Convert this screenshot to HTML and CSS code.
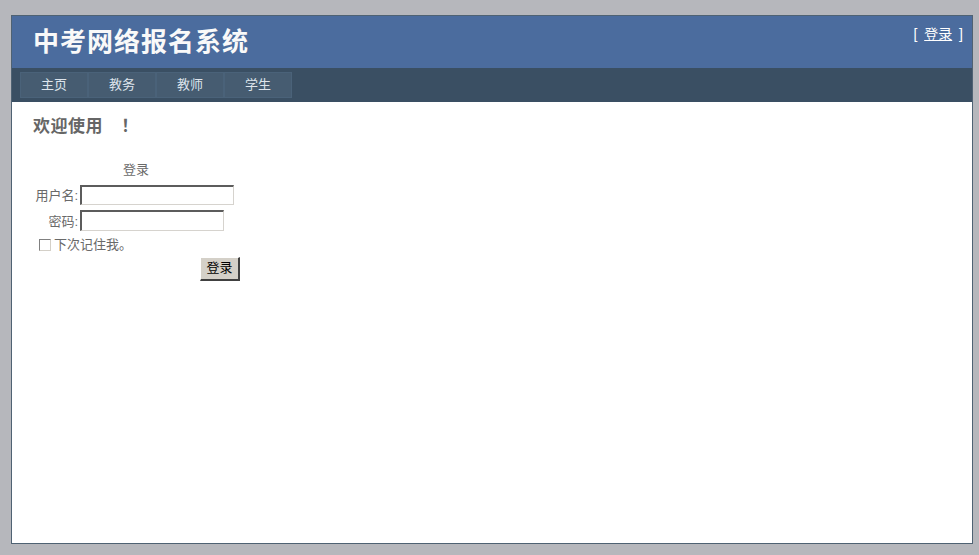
FILE: index.html
```html
<!DOCTYPE html>
<html lang="zh-CN">
<head>
<meta charset="utf-8">
<title>中考网络报名系统</title>
<link rel="stylesheet" href="styles.css">
</head>
<body>
<div class="page">
  <div class="header">
    <h1 class="title">中考网络报名系统</h1>
    <div class="login-display">[ <a href="#" class="login-link">登录</a> ]</div>
  </div>
  <div class="menu-bar">
    <ul class="menu">
      <li><a href="#" class="menu-item">主页</a></li>
      <li><a href="#" class="menu-item">教务</a></li>
      <li><a href="#" class="menu-item">教师</a></li>
      <li><a href="#" class="menu-item">学生</a></li>
    </ul>
  </div>
  <div class="main">
    <h2 class="welcome">欢迎使用 ！</h2>
    <form class="login-form">
      <div class="caption">登录</div>
      <div class="row row-user">
        <label class="label">用户名:</label>
        <span class="input input-user"></span>
      </div>
      <div class="row row-pass">
        <label class="label">密码:</label>
        <span class="input input-pass"></span>
      </div>
      <div class="row row-remember">
        <span class="checkbox"></span>
        <span class="remember-text">下次记住我。</span>
      </div>
      <div class="row row-button">
        <span class="button">登录</span>
      </div>
    </form>
  </div>
</div>
</body>
</html>
```
FILE: styles.css
```css
html, body {
  margin: 0;
  padding: 0;
}
body {
  background: #b6b7bc;
  font-family: "Liberation Sans", "Noto Sans CJK SC", sans-serif;
  font-size: 13px;
  color: #696969;
}
.page {
  width: 960px;
  height: 527px;
  margin: 15px 0 0 11px;
  background: #fff;
  border: 1px solid #4f6273;
}
.header {
  display: flex;
  justify-content: space-between;
  align-items: flex-start;
  background: #4b6c9e;
  height: 52px;
}
.title {
  margin: 0;
  padding: 0 0 0 21px;
  height: 52px;
  line-height: 52px;
  font-size: 26px;
  letter-spacing: 1px;
  font-weight: 700;
  color: #f9f9f9;
}
.login-display {
  padding: 8px 9px 0 0;
  font-size: 14px;
  line-height: 20px;
  word-spacing: 3px;
  color: #fff;
}
.login-link {
  color: #fff;
  text-decoration: underline;
}
.menu-bar {
  background: #3a4f63;
  padding: 4px 0 4px 8px;
  height: 26px;
}
.menu {
  list-style: none;
  margin: 0;
  padding: 0;
  display: flex;
}
.menu-item {
  display: block;
  width: 26px;
  padding: 4px 20px;
  line-height: 16px;
  height: 16px;
  background: #465c71;
  border: 1px solid #4a6279;
  color: #dde4ec;
  text-decoration: none;
  white-space: nowrap;
  font-size: 13px;
}
.main {
  padding: 13px 12px 0 20px;
}
.welcome {
  margin: 0 0 0 1px;
  font-size: 17px;
  line-height: 24px;
  font-weight: 700;
  word-spacing: 13px;
  letter-spacing: 0.5px;
  color: #666;
}
.login-form {
  width: 208px;
  margin-top: 19px;
}
.caption {
  height: 24px;
  line-height: 24px;
  text-align: center;
}
.row {
  display: flex;
  align-items: center;
}
.row-user {
  height: 25px;
}
.row-pass {
  height: 26px;
}
.label {
  width: 46px;
  text-align: right;
  margin-right: 2px;
  flex: none;
}
.input {
  display: block;
  box-sizing: border-box;
  height: 20px;
  background: #fff;
  border-top: 2px solid #5c5c5c;
  border-left: 2px solid #5c5c5c;
  border-right: 1px solid #d6d3ce;
  border-bottom: 1px solid #d6d3ce;
}
.input-user {
  width: 154px;
}
.input-pass {
  width: 144px;
  height: 21px;
}
.row-remember {
  height: 24px;
  padding-left: 7px;
}
.checkbox {
  display: block;
  box-sizing: border-box;
  width: 12px;
  height: 12px;
  margin-right: 3px;
  background: #fff;
  border-top: 1px solid #808080;
  border-left: 1px solid #808080;
  border-right: 1px solid #d4d0c8;
  border-bottom: 1px solid #d4d0c8;
}
.remember-text {
  line-height: 16px;
}
.row-button {
  justify-content: flex-end;
  height: 28px;
  align-items: flex-start;
}
.button {
  display: block;
  box-sizing: border-box;
  width: 40px;
  height: 24px;
  margin-top: 0;
  line-height: 20px;
  text-align: center;
  background: #d4d0c8;
  color: #000;
  border-top: 1px solid #fff;
  border-left: 1px solid #fff;
  border-right: 2px solid #404040;
  border-bottom: 2px solid #404040;
  font-size: 13px;
}
```
